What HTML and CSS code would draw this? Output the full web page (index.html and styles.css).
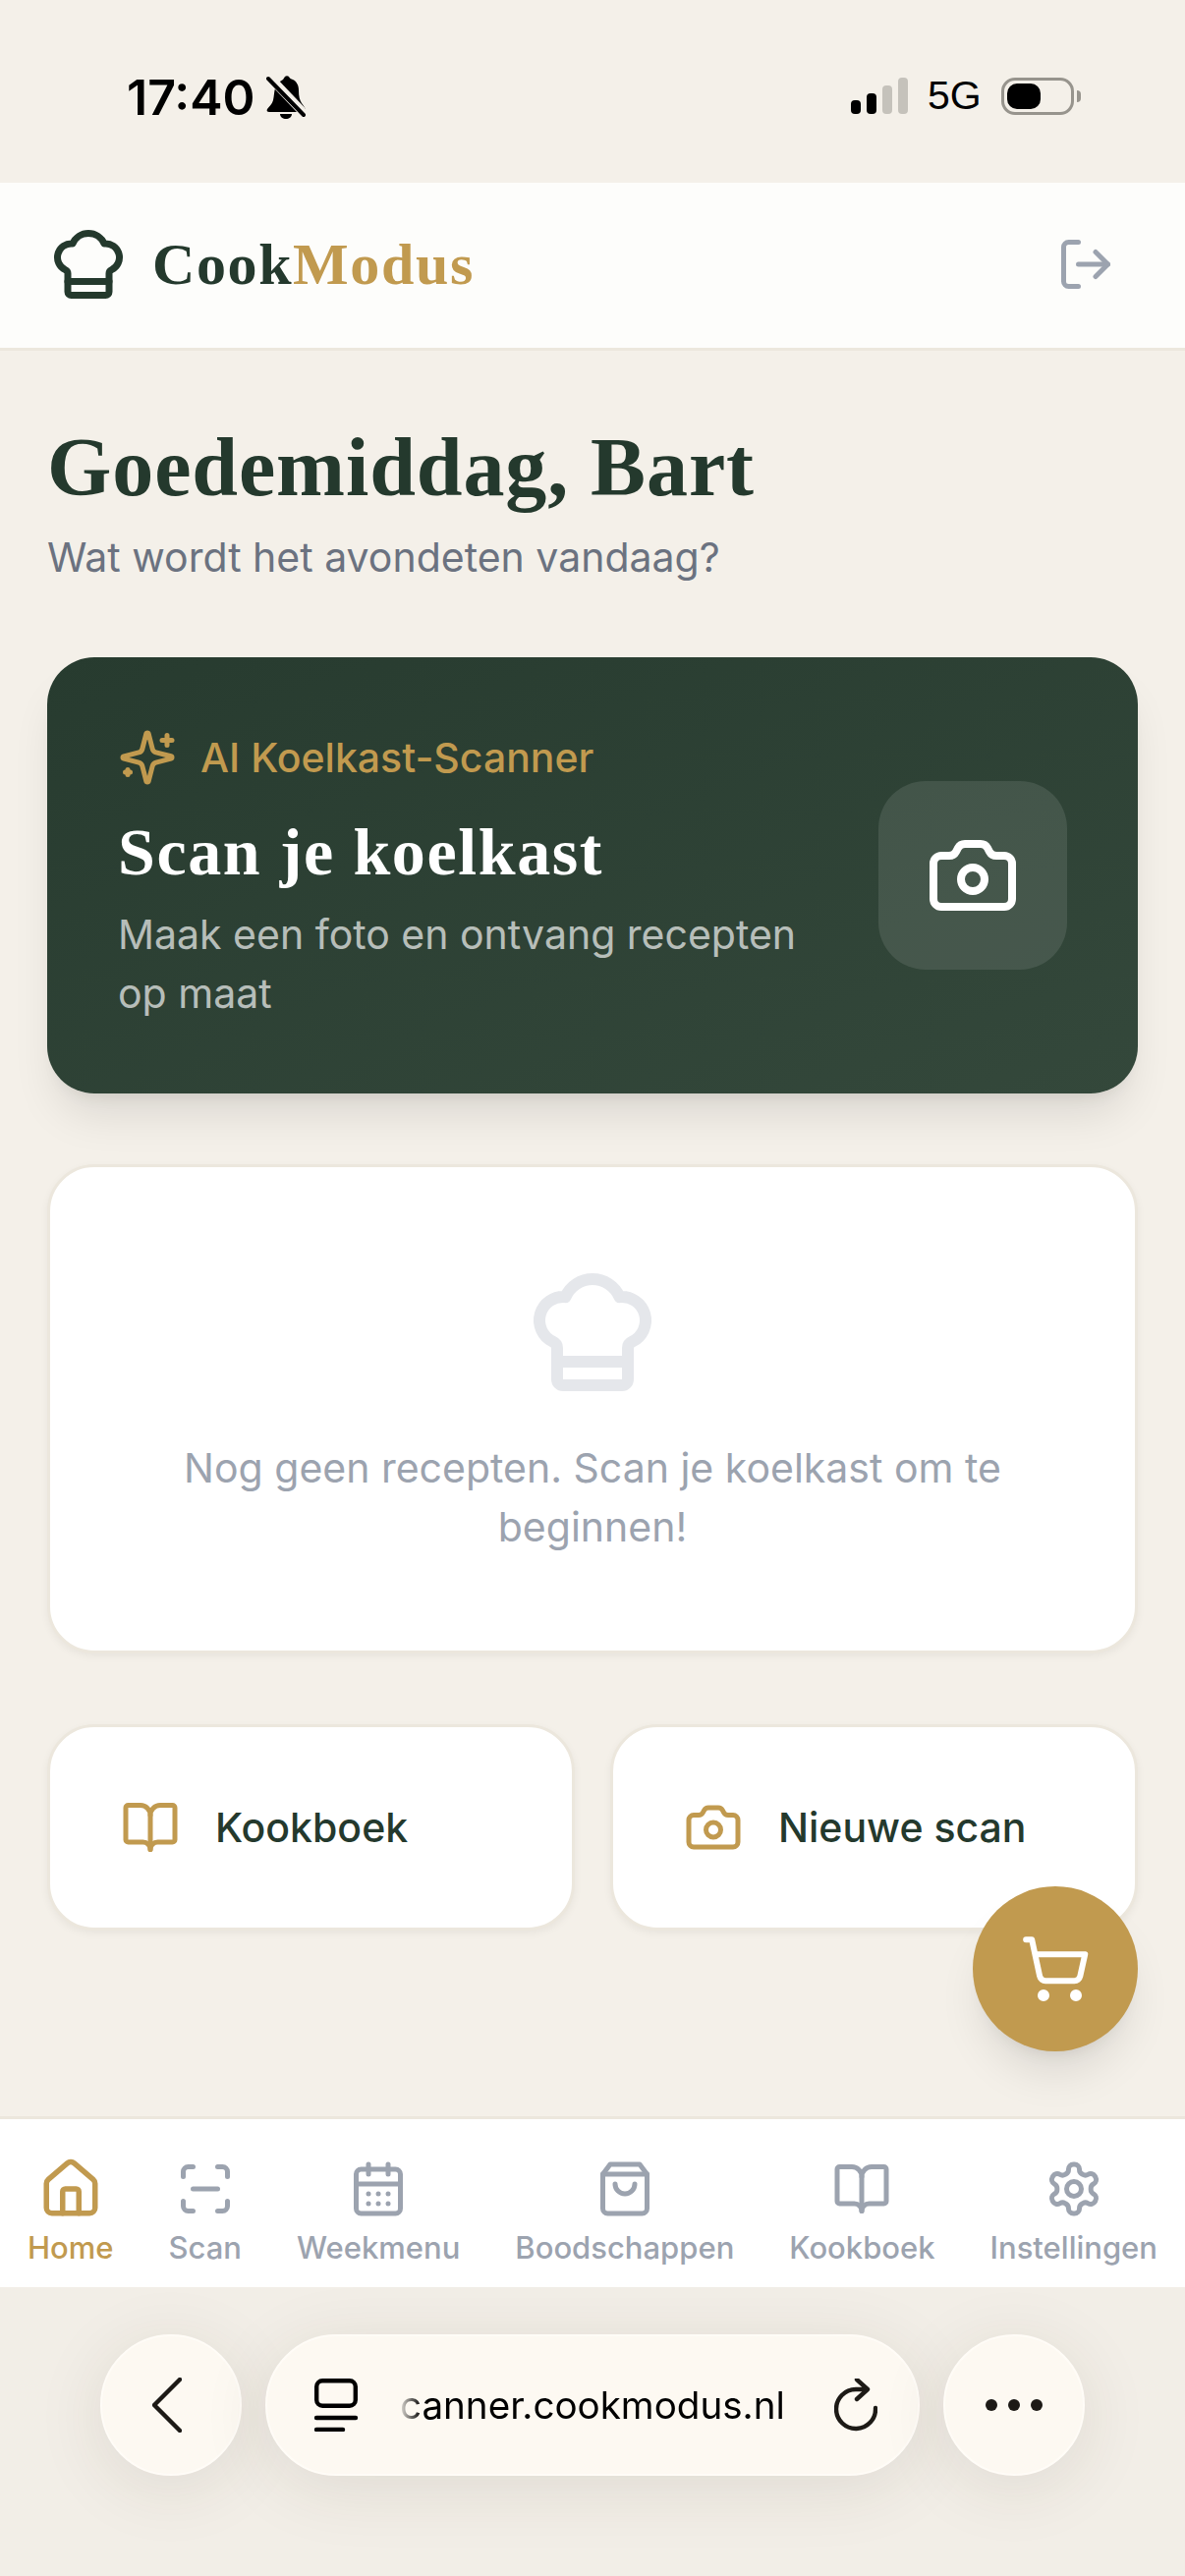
FILE: index.html
```html
<!DOCTYPE html>
<html lang="nl">
<head>
<meta charset="utf-8">
<title>CookModus</title>
<link rel="stylesheet" href="styles.css">
</head>
<body>
<div class="status">
  <div class="status-left">
    <span class="time">17:40</span>
    <svg class="bell" viewBox="0 0 40 44"><path d="M19 1c1-1 3-1 4 0 1 2 2 2 4 3 4 2 6 6 6 11 0 6 1 10 3 13 2 3 4 5 4 7 0 1-1 2-2 2H3c-2 0-3-1-2-3 2-3 5-5 6-9 1-5 1-9 2-12 1-5 5-7 8-9z"/><path d="M14 39h12c0 3-3 5-6 5s-6-2-6-5z"/><path class="bell-gap" d="M-2 -4 42 42"/><path class="bell-slash" d="M2 3 38 40"/></svg>
  </div>
  <div class="status-right">
    <div class="signal"><i class="b1"></i><i class="b2"></i><i class="b3"></i><i class="b4"></i></div>
    <span class="net">5G</span>
    <div class="battery"><div class="battery-level"></div></div>
    <div class="battery-nub"></div>
  </div>
</div>

<header class="header">
  <div class="brand">
    <svg class="i logo" viewBox="0 0 24 24"><path d="M17 21a1 1 0 0 0 1-1v-5.35c0-.457.316-.844.727-1.041a4 4 0 0 0-2.134-7.589 5 5 0 0 0-9.186 0 4 4 0 0 0-2.134 7.588c.411.198.727.585.727 1.041V20a1 1 0 0 0 1 1Z"/><path d="M6 17h12"/></svg>
    <span class="wordmark">Cook<span class="gold">Modus</span></span>
  </div>
  <button class="logout">
    <svg class="i s60 grey" viewBox="0 0 24 24"><path d="m16 17 5-5-5-5"/><path d="M21 12H9"/><path d="M9 21H5a2 2 0 0 1-2-2V5a2 2 0 0 1 2-2h4"/></svg>
  </button>
</header>

<main class="main">
  <h1 class="greeting">Goedemiddag, Bart</h1>
  <p class="sub">Wat wordt het avondeten vandaag?</p>

  <section class="scan-card">
    <div class="scan-text">
      <div class="scan-label">
        <svg class="i s60 goldstroke" viewBox="0 0 24 24"><path d="M9.937 15.5A2 2 0 0 0 8.5 14.063l-6.135-1.582a.5.5 0 0 1 0-.962L8.5 9.936A2 2 0 0 0 9.937 8.5l1.582-6.135a.5.5 0 0 1 .963 0L14.063 8.5A2 2 0 0 0 15.5 9.937l6.135 1.581a.5.5 0 0 1 0 .964L15.5 14.063a2 2 0 0 0-1.437 1.437l-1.582 6.135a.5.5 0 0 1-.963 0z"/><path d="M20 3v4"/><path d="M22 5h-4"/><path d="M4 17v2"/><path d="M5 18H3"/></svg>
        <span>AI Koelkast-Scanner</span>
      </div>
      <h2 class="scan-title">Scan je koelkast</h2>
      <p class="scan-desc">Maak een foto en ontvang recepten op maat</p>
    </div>
    <div class="scan-btn">
      <svg class="i cam-big" viewBox="0 0 24 24"><path d="M13.997 4a2 2 0 0 1 1.76 1.05l.486.9A2 2 0 0 0 18.003 7H20a2 2 0 0 1 2 2v9a2 2 0 0 1-2 2H4a2 2 0 0 1-2-2V9a2 2 0 0 1 2-2h1.997a2 2 0 0 0 1.759-1.048l.489-.904A2 2 0 0 1 10.004 4z"/><circle cx="12" cy="13" r="3"/></svg>
    </div>
  </section>

  <section class="empty">
    <svg class="i hat-empty" viewBox="0 0 24 24"><path d="M17 21a1 1 0 0 0 1-1v-5.35c0-.457.316-.844.727-1.041a4 4 0 0 0-2.134-7.589 5 5 0 0 0-9.186 0 4 4 0 0 0-2.134 7.588c.411.198.727.585.727 1.041V20a1 1 0 0 0 1 1Z"/><path d="M6 17h12"/></svg>
    <p class="empty-text">Nog geen recepten. Scan je koelkast om te beginnen!</p>
  </section>

  <div class="actions">
    <a class="action">
      <svg class="i s60 goldstroke" viewBox="0 0 24 24"><path d="M12 7v14"/><path d="M3 18a1 1 0 0 1-1-1V4a1 1 0 0 1 1-1h5a4 4 0 0 1 4 4 4 4 0 0 1 4-4h5a1 1 0 0 1 1 1v13a1 1 0 0 1-1 1h-6a3 3 0 0 0-3 3 3 3 0 0 0-3-3z"/></svg>
      <span>Kookboek</span>
    </a>
    <a class="action">
      <svg class="i s60 goldstroke" viewBox="0 0 24 24"><path d="M13.997 4a2 2 0 0 1 1.76 1.05l.486.9A2 2 0 0 0 18.003 7H20a2 2 0 0 1 2 2v9a2 2 0 0 1-2 2H4a2 2 0 0 1-2-2V9a2 2 0 0 1 2-2h1.997a2 2 0 0 0 1.759-1.048l.489-.904A2 2 0 0 1 10.004 4z"/><circle cx="12" cy="13" r="3"/></svg>
      <span>Nieuwe scan</span>
    </a>
  </div>

  <button class="fab">
    <svg class="i cart" viewBox="0 0 24 24"><circle cx="8" cy="21" r="1"/><circle cx="19" cy="21" r="1"/><path d="M2.05 2.05h2l2.66 12.42a2 2 0 0 0 2 1.58h9.78a2 2 0 0 0 1.95-1.57l1.65-7.43H5.12"/></svg>
  </button>
</main>

<nav class="nav">
  <a class="nav-item active">
    <svg class="i s60 home-icon" viewBox="0 0 24 24"><path d="M15 21v-8a1 1 0 0 0-1-1h-4a1 1 0 0 0-1 1v8"/><path d="M3 10a2 2 0 0 1 .709-1.528l7-5.999a2 2 0 0 1 2.582 0l7 5.999A2 2 0 0 1 21 10v9a2 2 0 0 1-2 2H5a2 2 0 0 1-2-2z"/></svg>
    <span>Home</span>
  </a>
  <a class="nav-item">
    <svg class="i s60" viewBox="0 0 24 24"><path d="M3 7V5a2 2 0 0 1 2-2h2"/><path d="M17 3h2a2 2 0 0 1 2 2v2"/><path d="M21 17v2a2 2 0 0 1-2 2h-2"/><path d="M7 21H5a2 2 0 0 1-2-2v-2"/><path d="M7 12h10"/></svg>
    <span>Scan</span>
  </a>
  <a class="nav-item">
    <svg class="i s60" viewBox="0 0 24 24"><path d="M8 2v4"/><path d="M16 2v4"/><rect x="3" y="4" width="18" height="18" rx="2"/><path d="M3 10h18"/><path d="M8 14h.01"/><path d="M12 14h.01"/><path d="M16 14h.01"/><path d="M8 18h.01"/><path d="M12 18h.01"/><path d="M16 18h.01"/></svg>
    <span>Weekmenu</span>
  </a>
  <a class="nav-item">
    <svg class="i s60" viewBox="0 0 24 24"><path d="M6 2 3 6v14a2 2 0 0 0 2 2h14a2 2 0 0 0 2-2V6l-3-4Z"/><path d="M3 6h18"/><path d="M16 10a4 4 0 0 1-8 0"/></svg>
    <span>Boodschappen</span>
  </a>
  <a class="nav-item">
    <svg class="i s60" viewBox="0 0 24 24"><path d="M12 7v14"/><path d="M3 18a1 1 0 0 1-1-1V4a1 1 0 0 1 1-1h5a4 4 0 0 1 4 4 4 4 0 0 1 4-4h5a1 1 0 0 1 1 1v13a1 1 0 0 1-1 1h-6a3 3 0 0 0-3 3 3 3 0 0 0-3-3z"/></svg>
    <span>Kookboek</span>
  </a>
  <a class="nav-item">
    <svg class="i s60" viewBox="0 0 24 24"><path d="M12.22 2h-.44a2 2 0 0 0-2 2v.18a2 2 0 0 1-1 1.73l-.43.25a2 2 0 0 1-2 0l-.15-.08a2 2 0 0 0-2.73.73l-.22.38a2 2 0 0 0 .73 2.73l.15.1a2 2 0 0 1 1 1.72v.51a2 2 0 0 1-1 1.74l-.15.09a2 2 0 0 0-.73 2.73l.22.38a2 2 0 0 0 2.73.73l.15-.08a2 2 0 0 1 2 0l.43.25a2 2 0 0 1 1 1.73V20a2 2 0 0 0 2 2h.44a2 2 0 0 0 2-2v-.18a2 2 0 0 1 1-1.73l.43-.25a2 2 0 0 1 2 0l.15.08a2 2 0 0 0 2.73-.73l.22-.39a2 2 0 0 0-.73-2.73l-.15-.08a2 2 0 0 1-1-1.74v-.5a2 2 0 0 1 1-1.74l.15-.09a2 2 0 0 0 .73-2.73l-.22-.38a2 2 0 0 0-2.73-.73l-.15.08a2 2 0 0 1-2 0l-.43-.25a2 2 0 0 1-1-1.73V4a2 2 0 0 0-2-2z"/><circle cx="12" cy="12" r="3"/></svg>
    <span>Instellingen</span>
  </a>
</nav>

<div class="browser">
  <button class="round">
    <svg class="chevron" viewBox="0 0 30 56"><path d="M28 2 2 28l26 26"/></svg>
  </button>
  <div class="url-pill">
    <svg class="tabs" viewBox="0 0 44 54"><rect x="2.2" y="2.2" width="39.6" height="25.6" rx="6"/><path d="M2 40h40"/><path d="M2 52h27"/></svg>
    <span class="url">canner.cookmodus.nl</span>
    <svg class="reload" viewBox="0 0 44 54"><path d="M42 30A20 20 0 1 1 22 11h10"/><path d="M23 1 34 11 23 21"/></svg>
  </div>
  <button class="round dots"><i></i><i></i><i></i></button>
</div>
</body>
</html>
```
FILE: styles.css
```css
* { box-sizing: border-box; }
html, body { margin: 0; padding: 0; }
body {
  width: 1206px;
  height: 2622px;
  overflow: hidden;
  display: flex;
  flex-direction: column;
  background: #f4f0e9;
  font-family: Inter, "Noto Sans", sans-serif;
  position: relative;
}
p, h1, h2 { margin: 0; }
button { border: 0; padding: 0; background: none; font: inherit; }

.i { fill: none; stroke: currentColor; stroke-width: 2; stroke-linecap: round; stroke-linejoin: round; display: block; flex: none; }
.s60 { width: 60px; height: 60px; }
.grey { color: #9ca3af; }
.goldstroke { color: #c19a4f; }
.gold { color: #c19a4f; }

/* status bar */
.status { height: 186px; display: flex; justify-content: space-between; padding: 77px 106px 0 129px; }
.status-left { display: flex; align-items: flex-start; gap: 11px; }
.time { font-size: 50px; font-weight: 600; line-height: 44px; color: #000; letter-spacing: 0; }
.bell { width: 40px; height: 44px; fill: #000; }
.bell-gap { stroke: #f4f0e9; stroke-width: 9; fill: none; }
.bell-slash { stroke: #000; stroke-width: 4; stroke-linecap: round; fill: none; }
.status-right { display: flex; align-items: flex-start; height: 40px; padding-top: 2px; }
.signal { display: flex; align-items: flex-end; gap: 6px; height: 37px; width: 58px; }
.signal i { display: block; width: 10px; border-radius: 4px; background: #000; }
.signal .b1 { height: 14px; }
.signal .b2 { height: 21px; }
.signal .b3 { height: 29px; background: #c5c2bb; }
.signal .b4 { height: 37px; background: #c5c2bb; }
.net { margin-left: 20px; font-family: "Liberation Sans", sans-serif; font-size: 41px; line-height: 37px; color: #000; width: 54px; }
.battery { margin-left: 21px; width: 74px; height: 38px; border: 3.5px solid #97948d; border-radius: 14px; padding: 3px; }
.battery-level { width: 34px; height: 100%; background: #000; border-radius: 10px; }
.battery-nub { width: 4px; height: 12px; margin: 13px 0 0 3px; background: #97948d; border-radius: 0 4px 4px 0; }

/* header */
.header { height: 171px; flex: none; display: flex; align-items: center; justify-content: space-between; padding: 0 71px 3px 48px; background: #fdfdfb; border-bottom: 3px solid #ece7dd; }
.brand { display: flex; align-items: center; gap: 23px; }
.logo { width: 84px; height: 84px; color: #24392d; }
.wordmark { font-family: "Liberation Serif", serif; font-weight: 700; font-size: 60px; letter-spacing: 1.6px; color: #24392d; line-height: 84px; }
.logout { display: block; }

/* main */
.main { flex: 1; display: flex; flex-direction: column; padding: 72px 48px 0; position: relative; }
.greeting { font-family: "Liberation Serif", serif; font-weight: 700; font-size: 84px; letter-spacing: .9px; line-height: 94px; margin-bottom: 2px; color: #24392d; }
.sub { margin-top: 12px; font-size: 41px; line-height: 60px; color: #6b7280; }

.scan-card { margin-top: 72px; padding: 72px; display: flex; align-items: center; gap: 24px; border-radius: 48px; background: linear-gradient(160deg, #273b2f, #34483b); box-shadow: 0 30px 45px -9px rgba(0,0,0,.1), 0 12px 18px -12px rgba(0,0,0,.1); }
.scan-text { flex: 1; }
.scan-label { display: flex; align-items: center; gap: 24px; font-size: 41px; font-weight: 500; line-height: 60px; color: #c19a4f; }
.scan-title { margin-top: 24px; font-family: "Liberation Serif", serif; font-weight: 700; font-size: 68px; letter-spacing: 1.6px; line-height: 84px; color: #fff; }
.scan-desc { margin-top: 12px; font-size: 41px; line-height: 60px; color: rgba(255,255,255,.68); }
.scan-btn { flex: none; width: 192px; height: 192px; border-radius: 48px; background: rgba(255,255,255,.1); display: flex; align-items: center; justify-content: center; }
.cam-big { width: 96px; height: 96px; color: #fff; }

.empty { margin-top: 72px; padding: 96px 72px; display: flex; flex-direction: column; align-items: center; gap: 36px; background: #fff; border: 3px solid #ece7dd; border-radius: 48px; box-shadow: 0 3px 9px rgba(0,0,0,.05); }
.hat-empty { width: 144px; height: 144px; color: #e5e7eb; }
.empty-text { font-size: 41px; line-height: 60px; text-align: center; color: #9ca3af; }

.actions { margin-top: 72px; display: grid; grid-template-columns: 1fr 1fr; gap: 36px; }
.action { display: flex; align-items: center; gap: 36px; padding: 72px; background: #fff; border: 3px solid #ece7dd; border-radius: 48px; box-shadow: 0 3px 9px rgba(0,0,0,.05); font-size: 41px; font-weight: 500; line-height: 60px; color: #24392d; white-space: nowrap; }

.fab { position: absolute; right: 48px; top: 1563px; width: 168px; height: 168px; border-radius: 50%; background: #c19a4f; display: flex; align-items: center; justify-content: center; box-shadow: 0 30px 45px -9px rgba(0,0,0,.1), 0 12px 18px -12px rgba(0,0,0,.1); }
.cart { width: 72px; height: 72px; color: #fff; }

/* nav */
.nav { flex: none; height: 174px; display: flex; justify-content: space-around; background: #fff; border-top: 3px solid #ece7dd; padding-top: 41px; }
.nav-item { display: flex; flex-direction: column; align-items: center; color: #9ca3af; font-size: 31px; font-weight: 500; line-height: 48px; gap: 6px; }
.nav-item.active { color: #c19a4f; }
.home-icon { transform: scale(1.1); }

/* browser chrome */
.browser { flex: none; height: 294px; padding: 48px 102px 0; display: flex; gap: 24px; align-items: flex-start; background: #f2eee7; }
.round, .url-pill { height: 144px; background: #fdf9f2; border: 2px solid #fffcf7; border-radius: 72px; box-shadow: 0 12px 70px rgba(60,50,30,.1); }
.round { width: 144px; flex: none; display: flex; align-items: center; justify-content: center; }
.chevron { width: 30px; height: 56px; fill: none; stroke: #1d1a16; stroke-width: 4.5; stroke-linecap: round; stroke-linejoin: round; margin-right: 9px; }
.url-pill { flex: 1; display: flex; align-items: center; padding: 0 41px 0 47px; }
.tabs { width: 46px; height: 54px; flex: none; fill: none; stroke: #000; stroke-width: 4.4; stroke-linecap: round; }
.url { margin-left: 42px; flex: 1; font-size: 38.6px; line-height: 60px; color: #000; white-space: nowrap; -webkit-mask-image: linear-gradient(90deg, rgba(0,0,0,.1), #000 22px); mask-image: linear-gradient(90deg, rgba(0,0,0,.1), #000 22px); }
.reload { width: 44px; height: 54px; flex: none; fill: none; stroke: #1d1a16; stroke-width: 4.4; stroke-linecap: round; stroke-linejoin: round; }
.dots { gap: 11px; }
.dots i { display: block; width: 12px; height: 12px; border-radius: 50%; background: #1d1a16; }
```
